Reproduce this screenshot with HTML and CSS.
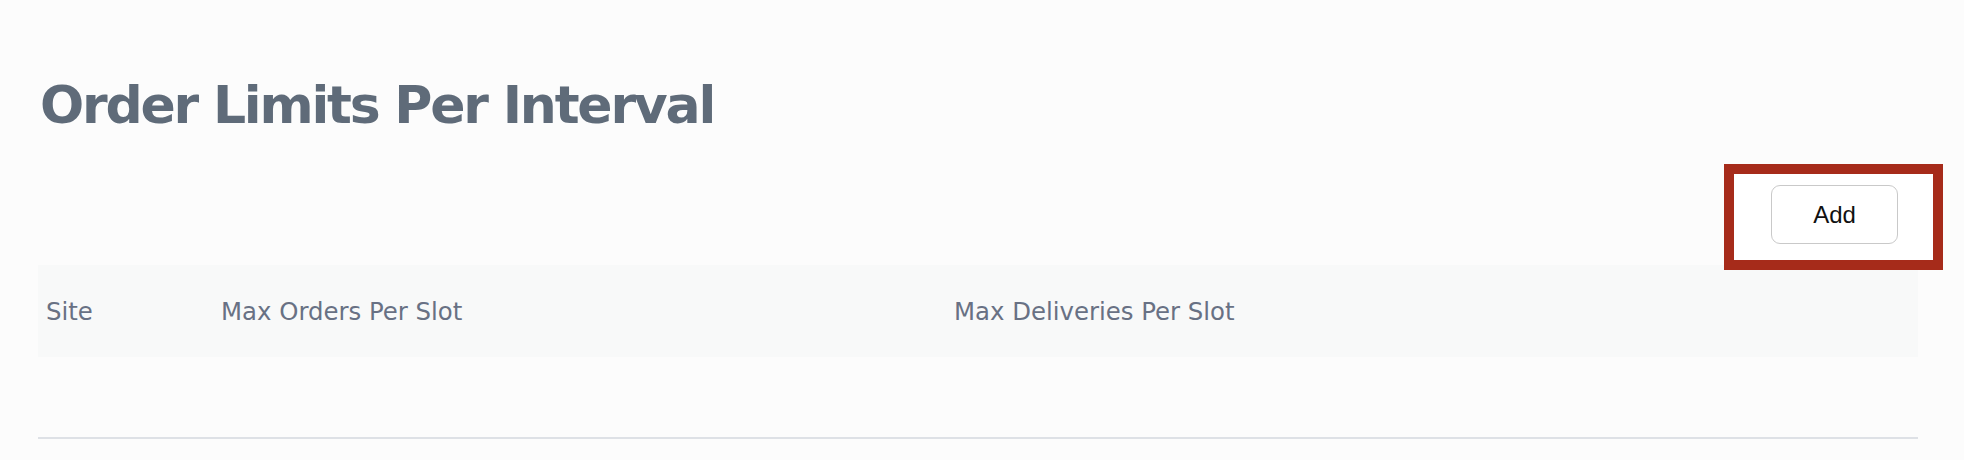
FILE: index.html
```html
<!DOCTYPE html>
<html lang="en">
<head>
<meta charset="utf-8">
<title>Order Limits Per Interval</title>
<link rel="stylesheet" href="styles.css">
</head>
<body>
<main class="page">
  <h1 class="title">Order Limits Per Interval</h1>
  <div class="toolbar">
    <div class="add-wrap">
      <button class="add-btn" type="button">Add</button>
      <span class="highlight" aria-hidden="true"></span>
    </div>
  </div>
  <div class="table">
    <div class="table-head">
      <div class="th">Site</div>
      <div class="th">Max Orders Per Slot</div>
      <div class="th">Max Deliveries Per Slot</div>
    </div>
    <div class="table-body"></div>
  </div>
</main>
</body>
</html>
```

FILE: styles.css
```css
html, body {
  margin: 0;
  padding: 0;
  background: #fcfcfc;
}

.page {
  padding: 79px 46px 0 38px;
  font-family: "DejaVu Sans", Verdana, sans-serif;
}

.title {
  margin: 0;
  font-size: 52px;
  line-height: 52px;
  font-weight: 700;
  letter-spacing: -2.2px;
  color: #5f6b79;
  padding-left: 2px;
}

.toolbar {
  display: flex;
  justify-content: flex-end;
  margin-top: 54px;
  padding-right: 20px;
}

.add-wrap {
  position: relative;
  display: flex;
}

.add-btn {
  position: relative;
  z-index: 2;
  width: 127px;
  height: 59px;
  background: #ffffff;
  border: 1.5px solid #c9c9c9;
  border-radius: 9px;
  font-family: "Liberation Sans", Arial, sans-serif;
  font-size: 24px;
  color: #111111;
  padding: 0;
}

.highlight {
  position: absolute;
  z-index: 1;
  left: -47px;
  top: -21px;
  width: 199px;
  height: 86px;
  border: 10px solid #a62b1a;
  background: #ffffff;
}

.table {
  margin-top: 21px;
}

.table-head {
  display: grid;
  grid-template-columns: 175px 733px 1fr;
  align-items: center;
  height: 92px;
  background: #f8f9f9;
}

.th {
  padding-left: 8px;
  font-size: 24.4px;
  color: #687184;
}

.table-body {
  height: 80px;
  border-bottom: 2px solid #dee1e6;
}
```
